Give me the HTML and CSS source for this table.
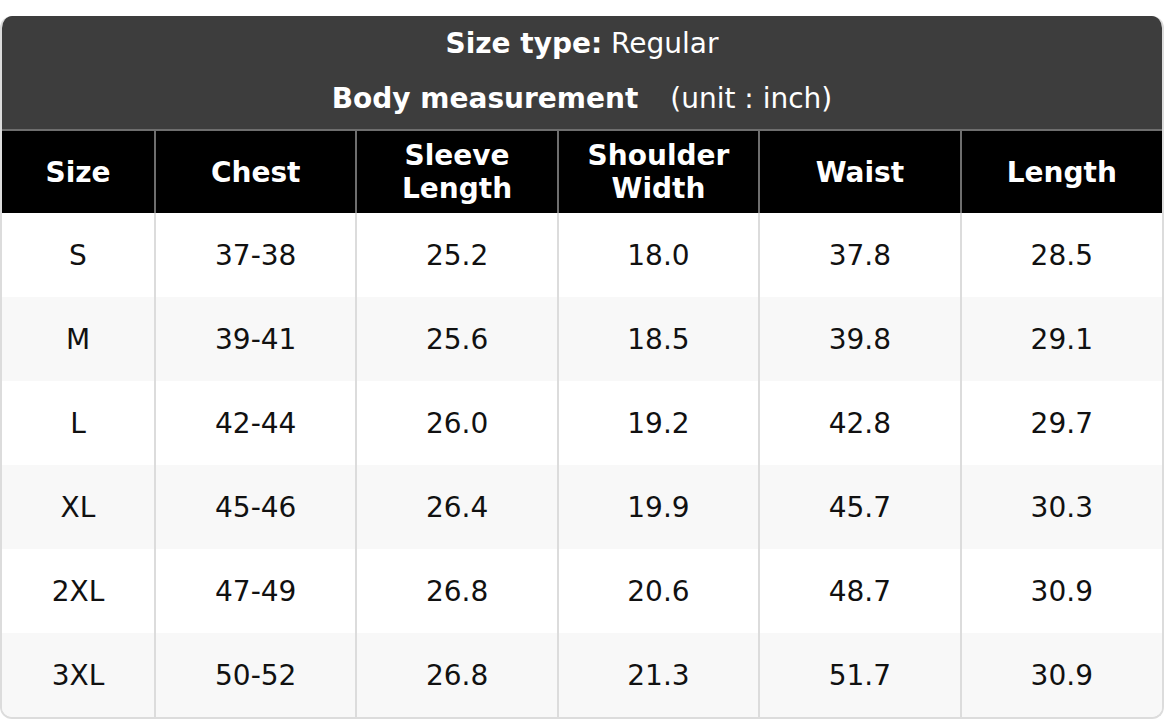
FILE: index.html
```html
<!DOCTYPE html>
<html>
<head>
<meta charset="utf-8">
<link rel="stylesheet" href="styles.css">
</head>
<body>
<div class="card">
  <div class="head">
    <div class="line"><b>Size type:</b> Regular</div>
    <div class="line"><b>Body measurement</b><span class="unit">(unit : inch)</span></div>
  </div>
  <table class="chart">
    <colgroup>
      <col class="c0"><col><col><col><col><col>
    </colgroup>
    <thead>
      <tr><th>Size</th><th>Chest</th><th>Sleeve<br>Length</th><th>Shoulder<br>Width</th><th>Waist</th><th>Length</th></tr>
    </thead>
    <tbody>
      <tr><td>S</td><td>37-38</td><td>25.2</td><td>18.0</td><td>37.8</td><td>28.5</td></tr>
      <tr><td>M</td><td>39-41</td><td>25.6</td><td>18.5</td><td>39.8</td><td>29.1</td></tr>
      <tr><td>L</td><td>42-44</td><td>26.0</td><td>19.2</td><td>42.8</td><td>29.7</td></tr>
      <tr><td>XL</td><td>45-46</td><td>26.4</td><td>19.9</td><td>45.7</td><td>30.3</td></tr>
      <tr><td>2XL</td><td>47-49</td><td>26.8</td><td>20.6</td><td>48.7</td><td>30.9</td></tr>
      <tr><td>3XL</td><td>50-52</td><td>26.8</td><td>21.3</td><td>51.7</td><td>30.9</td></tr>
    </tbody>
  </table>
</div>
</body>
</html>
```
FILE: styles.css
```css
html, body {
  margin: 0;
  padding: 0;
  background: #ffffff;
}
body {
  padding-top: 16px;
  font-family: "DejaVu Sans", sans-serif;
  color: #111;
}
.card {
  width: 1164px;
  border-radius: 12px;
  overflow: hidden;
  background: #ffffff;
  border: 2px solid #dcdcdc;
  border-top: none;
  box-sizing: border-box;
}
.head {
  background: #3d3d3d;
  color: #ffffff;
  font-size: 28px;
  text-align: center;
  margin: 0 -2px;
}
.head .line {
  height: 56px;
  line-height: 56px;
}
.head .line + .line {
  height: 57px;
  line-height: 54px;
}
.head .unit {
  margin-left: 32px;
}
.chart {
  width: 100%;
  border-collapse: collapse;
  table-layout: fixed;
  font-size: 28px;
}
.chart .c0 {
  width: 153px;
}
.chart th {
  background: #000000;
  color: #ffffff;
  font-weight: bold;
  line-height: 33px;
  height: 82px;
  padding: 0;
  border: 2px solid #6e6e6e;
  border-bottom: none;
}
.chart th:first-child { border-left: none; }
.chart th:last-child { border-right: none; }
.chart td {
  text-align: center;
  height: 84px;
  padding: 1px 0 0;
  box-sizing: border-box;
  border-left: 2px solid #dcdcdc;
  border-right: 2px solid #dcdcdc;
  color: #111;
}
.chart td:first-child { border-left: none; }
.chart td:last-child { border-right: none; }
.chart tbody tr:nth-child(even) td {
  background: #f8f8f8;
}
```
